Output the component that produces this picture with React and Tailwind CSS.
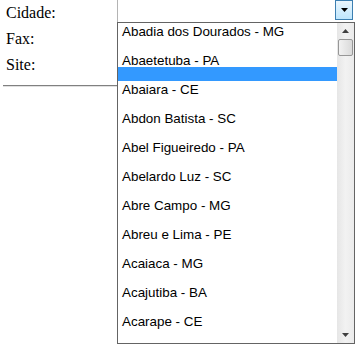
import React from "react";

const items = [
  "Abadia dos Dourados - MG",
  "Abaetetuba - PA",
  "Abaiara - CE",
  "Abdon Batista - SC",
  "Abel Figueiredo - PA",
  "Abelardo Luz - SC",
  "Abre Campo - MG",
  "Abreu e Lima - PE",
  "Acaiaca - MG",
  "Acajutiba - BA",
  "Acarape - CE",
];

export default function App() {
  return (
    <div className="flex w-[360px] h-[346px] bg-white overflow-hidden">
      <div className="w-[117px] shrink-0 flex flex-col">
        <div className="pl-[6px] font-['Liberation_Serif',serif] text-[16px] leading-[26px] text-black">
          <div>Cidade:</div>
          <div>Fax:</div>
          <div>Site:</div>
        </div>
        <div className="ml-[3px] mt-[7px] h-[2px] border-t border-[#808080] border-b-[#e0e0e0] border-b"></div>
      </div>
      <div className="w-[238px] shrink-0 flex flex-col">
        <div className="h-[22px] border-l border-[#b4b4b4] flex justify-end pr-[2px]">
          <div className="w-[18px] h-[20px] border border-[#3c7fb1] bg-gradient-to-b from-[#eaf6fd] to-[#bee6fd] flex items-center justify-center">
            <svg width="7" height="4" viewBox="0 0 7 4"><path d="M0 0h7L3.5 4z" fill="#000" /></svg>
          </div>
        </div>
        <div className="h-[322px] border border-[#646464] flex">
          <div className="flex-1 flex flex-col font-['Liberation_Sans',Arial,sans-serif] text-[13.4px] text-black">
            {items.map((t, i) => (
              <div key={t} className="h-[29px] shrink-0 flex flex-col">
                <div className="pl-[4px] pt-[1px] leading-[15px]">{t}</div>
                {i === 1 && <div className="mt-[-1px] h-[14px] bg-[#3399ff]"></div>}
              </div>
            ))}
          </div>
          <div className="w-[17px] shrink-0 bg-gradient-to-r from-[#e6e6e6] via-[#f2f2f2] to-[#ebebeb] flex flex-col items-center">
            <div className="h-[16px] flex items-center justify-center">
              <svg width="7" height="4" viewBox="0 0 7 4"><path d="M3.5 0L7 4H0z" fill="#404040" /></svg>
            </div>
            <div className="w-[15px] h-[17px] border border-[#979797] rounded-[2px] bg-gradient-to-r from-[#f2f2f2] to-[#dadada]"></div>
            <div className="flex-1"></div>
            <div className="h-[17px] flex items-center justify-center">
              <svg width="7" height="4" viewBox="0 0 7 4"><path d="M0 0h7L3.5 4z" fill="#404040" /></svg>
            </div>
          </div>
        </div>
      </div>
    </div>
  );
}
